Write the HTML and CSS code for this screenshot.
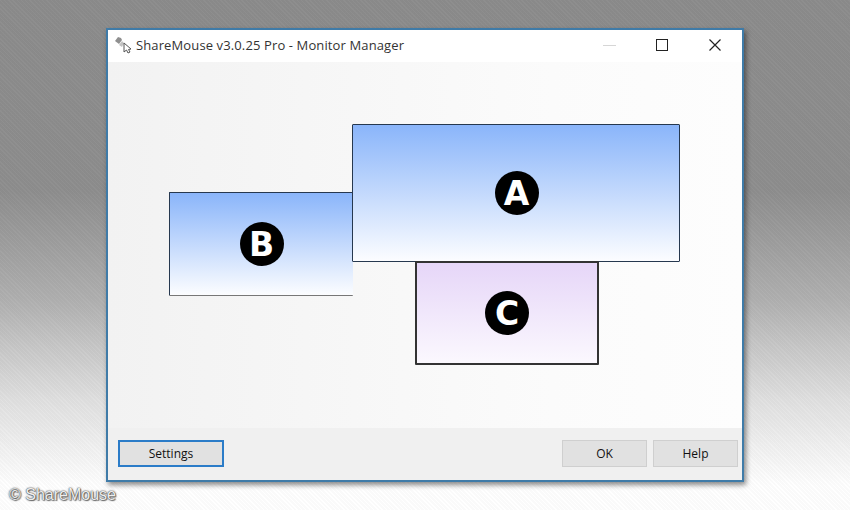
FILE: index.html
```html
<!DOCTYPE html>
<html lang="en">
<head>
  <meta charset="UTF-8" />
  <title>ShareMouse Monitor Manager</title>
  <link rel="stylesheet" href="styles.css">
</head>
<body>
  <div class="window">
    <div class="titlebar">
      <svg class="app-icon" width="20" height="20" viewBox="0 0 20 20">
        <path d="M1 6 L4 2 L7 3 L8 5 L5 9 Z" fill="#8f8f8f" />
        <path d="M5 10 L8 6 L10 8 L8 12 Z" fill="#c2c2c2" />
        <path d="M10 8 L10 17 L12.5 15 L14 18 L16 17 L14.5 14.5 L17 14 Z" fill="#fff" stroke="#555" stroke-width="1" />
      </svg>
      <span class="title">ShareMouse v3.0.25 Pro - Monitor Manager</span>
      <div class="controls">
        <span class="ctl ctl-min"></span>
        <span class="ctl ctl-max"></span>
        <svg class="ctl-close" width="12" height="12" viewBox="0 0 12 12">
          <path d="M0.5 0.5 L11.5 11.5 M11.5 0.5 L0.5 11.5" stroke="#222" stroke-width="1.2" fill="none" />
        </svg>
      </div>
    </div>

    <div class="canvas">
      <div class="monitor monitor-b"><span class="badge">B</span></div>
      <div class="monitor monitor-a"><span class="badge">A</span></div>
      <div class="monitor monitor-c"><span class="badge">C</span></div>
    </div>

    <div class="footer">
      <button class="btn btn-settings">Settings</button>
      <div class="footer-right">
        <button class="btn">OK</button>
        <button class="btn">Help</button>
      </div>
    </div>
  </div>

  <div class="copyright">© ShareMouse</div>
</body>
</html>
```

FILE: styles.css
```css
body {
  margin: 0;
  height: 510px;
  overflow: hidden;
  font-family: "Open Sans", "Noto Sans", sans-serif;
  background:
    repeating-linear-gradient(45deg, rgba(255, 255, 255, 0.02) 0 1px, rgba(0, 0, 0, 0.02) 1px 3px),
    linear-gradient(to bottom, #8c8c8c 0, #8e8e8e 190px, #b0b0b0 300px, #c9c9c9 350px, #e0e0e0 400px, #fff 485px);
  padding: 28px 0 0 106px;
  box-sizing: border-box;
}

.window {
  width: 638px;
  height: 454px;
  box-sizing: border-box;
  border: 2px solid #3f7ba8;
  background: #f3f3f3;
  display: flex;
  flex-direction: column;
  box-shadow: 2px 3px 5px rgba(0, 0, 0, 0.45);
}

.titlebar {
  height: 32px;
  background: #fff;
  display: flex;
  align-items: center;
  padding: 0 0 2px 6px;
  box-sizing: border-box;
  flex-shrink: 0;
}

.app-icon {
  margin-right: 2px;
}

.title {
  font-size: 13px;
  color: #333;
  letter-spacing: 0.12px;
}

.controls {
  margin-left: auto;
  display: flex;
  align-items: center;
  padding-right: 21px;
}

.ctl-min {
  width: 13px;
  height: 1px;
  background: #d6d6d6;
}

.ctl-max {
  width: 10px;
  height: 10px;
  border: 1px solid #222;
  margin-left: 40px;
}

.ctl-close {
  margin-left: 41px;
}

.canvas {
  flex: 1;
  position: relative;
  background: linear-gradient(to right, #f2f2f2, #fbfbfb 70%, #fdfdfd);
}

.monitor {
  position: absolute;
  box-sizing: border-box;
  border: 1px solid #26384f;
  border-radius: 1px;
  display: flex;
  align-items: center;
  justify-content: center;
  background: linear-gradient(to bottom, #8ab5fa, #fcfdff);
}

.monitor-a {
  left: 244px;
  top: 62px;
  width: 328px;
  height: 138px;
  padding-left: 1px;
}

.monitor-b {
  left: 61px;
  top: 130px;
  width: 184px;
  height: 104px;
  border-right: none;
  border-bottom-color: #777;
}

.monitor-c {
  left: 307px;
  top: 199px;
  width: 184px;
  height: 104px;
  border: 2px solid #333;
  background: linear-gradient(to bottom, #e6d6f8, #fbf8fe);
}

.badge {
  width: 44px;
  height: 44px;
  border-radius: 50%;
  background: #000;
  color: #fff;
  display: flex;
  align-items: center;
  justify-content: center;
  font-family: "DejaVu Sans", sans-serif;
  font-weight: bold;
  font-size: 33px;
}

.footer {
  height: 52px;
  flex-shrink: 0;
  background: #f0f0f0;
  display: flex;
  justify-content: space-between;
  align-items: flex-start;
  padding: 12px 4px 0 10px;
  box-sizing: border-box;
}

.footer-right {
  display: flex;
  gap: 6px;
}

.btn {
  width: 85px;
  height: 27px;
  box-sizing: border-box;
  background: #e1e1e1;
  border: 1px solid #cfcfcf;
  font-family: inherit;
  font-size: 12px;
  color: #111;
  padding: 0;
}

.btn-settings {
  width: 106px;
  border: 2px solid #2b7cc8;
}

.copyright {
  position: absolute;
  left: 9px;
  top: 486px;
  font-family: "Liberation Sans", Arial, sans-serif;
  font-size: 16px;
  color: #eee;
  text-shadow: 0 0 2px #444, 0 0 1px #444, 1px 1px 1px #777;
}
```
